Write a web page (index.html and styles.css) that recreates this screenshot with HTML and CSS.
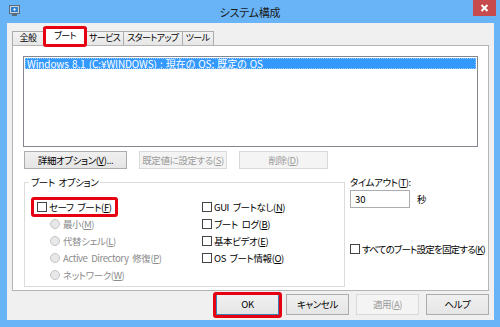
FILE: index.html
```html
<!DOCTYPE html>
<html lang="ja">
<head>
<meta charset="utf-8">
<title>システム構成</title>
<link rel="stylesheet" href="styles.css">
</head>
<body>
<div class="window">
  <div class="titlebar">
    <svg class="appicon" viewBox="0 0 11 11" width="11" height="11">
      <rect x="0.5" y="0.5" width="10" height="8" fill="#c9d3dc" stroke="#5a6b7a"/>
      <rect x="2" y="2" width="7" height="5" fill="#2f7fd1"/>
      <path d="M4 4.5 L5.5 3 L7 4.5 L5.5 6 Z" fill="#e8f3ff"/>
      <rect x="3" y="9" width="5" height="2" fill="#5a6b7a"/>
    </svg>
    <div class="title">システム構成</div>
    <div class="close">
      <svg viewBox="0 0 23 16" width="23" height="16">
        <path d="M8.5 5 L14.5 11 M14.5 5 L8.5 11" stroke="#fff" stroke-width="2"/>
      </svg>
    </div>
  </div>
  <div class="client">
    <div class="tabs">
      <div class="tab">全般</div>
      <div class="tab active">ブート</div>
      <div class="tab">サービス</div>
      <div class="tab">スタートアップ</div>
      <div class="tab">ツール</div>
    </div>
    <div class="panel">
      <div class="listbox">
        <div class="item sel">Windows 8.1 (C:¥WINDOWS) : 現在の OS; 既定の OS</div>
      </div>
      <div class="btnrow">
        <div class="btn w-adv">詳細オプション(<u>V</u>)...</div>
        <div class="btn disabled w-def">既定値に設定する(<u>S</u>)</div>
        <div class="btn disabled w-del">削除(<u>D</u>)</div>
      </div>
      <div class="lower">
        <fieldset class="group">
          <legend>ブート オプション</legend>
          <div class="groupbody">
            <div class="col col1">
              <div class="row hl"><span class="chk"></span>セーフ ブート(<u>F</u>)</div>
              <div class="row sub dis"><span class="radio"></span>最小(<u>M</u>)</div>
              <div class="row sub dis"><span class="radio"></span>代替シェル(<u>L</u>)</div>
              <div class="row sub dis"><span class="radio"></span>Active Directory 修復(<u>P</u>)</div>
              <div class="row sub dis"><span class="radio"></span>ネットワーク(<u>W</u>)</div>
            </div>
            <div class="col col2">
              <div class="row"><span class="chk"></span>GUI ブートなし(<u>N</u>)</div>
              <div class="row"><span class="chk"></span>ブート ログ(<u>B</u>)</div>
              <div class="row"><span class="chk"></span>基本ビデオ(<u>E</u>)</div>
              <div class="row"><span class="chk"></span>OS ブート情報(<u>O</u>)</div>
            </div>
          </div>
        </fieldset>
        <div class="side">
          <div class="label">タイムアウト(<u>T</u>):</div>
          <div class="timeout">
            <div class="input">30</div>
            <span class="unit">秒</span>
          </div>
          <div class="row lock"><span class="chk"></span>すべてのブート設定を固定する(<u>K</u>)</div>
        </div>
      </div>
    </div>
    <div class="footer">
      <div class="btn fbtn default">OK</div>
      <div class="btn fbtn">キャンセル</div>
      <div class="btn fbtn disabled">適用(<u>A</u>)</div>
      <div class="btn fbtn">ヘルプ</div>
    </div>
  </div>
</div>
</body>
</html>
```
FILE: styles.css
```css
* { box-sizing: border-box; }
body {
  margin: 0;
  font-family: "Noto Sans CJK JP", "Liberation Sans", sans-serif;
  font-size: 9.5px;
  letter-spacing: -0.4px;
  word-spacing: 2px;
  font-feature-settings: "palt";
  color: #000;
}
u { text-decoration: underline; text-underline-offset: 1px; }

.window {
  width: 500px;
  height: 327px;
  background: #69b4f6;
  display: flex;
  flex-direction: column;
  overflow: hidden;
}
.titlebar {
  height: 23px;
  flex: none;
  display: grid;
  grid-template-columns: 1fr auto 1fr;
  align-items: start;
}
.appicon { margin: 5px 0 0 9px; }
.title {
  font-size: 11px;
  letter-spacing: -0.2px;
  line-height: 25px;
  color: #1a1a1a;
}
.close {
  justify-self: end;
  width: 23px;
  height: 16px;
  margin-right: 4px;
  background: #c74a4c;
}
.close svg { display: block; }

.client {
  flex: 1;
  margin: 0 6px 7px 7px;
  background: #f0f0f0;
  display: flex;
  flex-direction: column;
}

.tabs {
  height: 22px;
  flex: none;
  display: flex;
  align-items: flex-end;
  padding-left: 6px;
  position: relative;
  z-index: 1;
}
.tab {
  height: 14px;
  min-width: 32px;
  border: 1px solid #acacac;
  border-bottom: none;
  margin-left: -1px;
  padding: 0 3px;
  background: linear-gradient(#f3f3f3, #e6e6e6);
  font-size: 9px;
  letter-spacing: -0.6px;
  line-height: 12px;
  text-align: center;
  white-space: nowrap;
}
.tab.active {
  height: 19px;
  width: 44px;
  margin: 0 -1px -1px -1px;
  background: #fff;
  padding-top: 2px;
  position: relative;
  z-index: 2;
}
.tab.active::after {
  content: "";
  position: absolute;
  left: -1px;
  right: -1px;
  top: -2px;
  bottom: -1px;
  border: 3px solid #e60012;
  border-radius: 3px;
}

.panel {
  height: 246px;
  flex: none;
  margin: 0 5px;
  background: #fff;
  border: 1px solid #b4b4b4;
  padding: 10px 10px 0 10px;
}

.listbox {
  height: 91px;
  border: 1px solid #828790;
  background: #fff;
  padding: 1px;
}
.item {
  height: 11px;
  line-height: 11px;
  padding-left: 2px;
  white-space: nowrap;
  font-size: 10px;
  letter-spacing: -0.1px;
  word-spacing: 1px;
}
.item.sel {
  background: #3399ff;
  color: #fff;
  outline: 1px dotted #9cc9f5;
  outline-offset: -1px;
}

.btnrow {
  display: flex;
  gap: 12px;
  margin-top: 4px;
  padding-left: 1px;
}
.btn {
  height: 18px;
  border: 1px solid #acacac;
  background: linear-gradient(#f0f0f0, #e5e5e5);
  text-align: center;
  line-height: 16px;
  white-space: nowrap;
}
.btn.disabled {
  background: #f4f4f4;
  border-color: #d9d9d9;
  color: #9a9a9a;
}
.w-adv { width: 103px; }
.w-def { width: 88px; }
.w-del { width: 89px; }

.lower {
  display: flex;
  margin-top: 7px;
}
.group {
  flex: none;
  width: 321px;
  margin: 0 0 0 1px;
  padding: 0;
  border: 1px solid #dcdcdc;
  min-width: 0;
}
.group legend {
  margin-left: 4px;
  padding: 0 2px;
  line-height: 12px;
}
.groupbody {
  height: 98px;
  display: flex;
  padding: 10px 0 0 12px;
}
.col { display: flex; flex-direction: column; }
.col1 { width: 165px; }
.row {
  height: 17px;
  display: flex;
  align-items: center;
  white-space: nowrap;
}
.row.sub { padding-left: 13px; }
.row.dis { color: #8a8a8a; }
.chk {
  width: 10px;
  height: 10px;
  border: 1px solid #444;
  background: #fff;
  margin-right: 2px;
  flex: none;
}
.radio {
  width: 10px;
  height: 10px;
  border-radius: 50%;
  border: 1px solid #c4c4c4;
  background: #e8e8e8;
  margin-right: 3px;
  flex: none;
}
.row.hl {
  position: relative;
  align-self: flex-start;
}
.row.hl::after {
  content: "";
  position: absolute;
  left: -6px;
  right: -6px;
  top: -1px;
  bottom: -2px;
  border: 3px solid #e60012;
  border-radius: 3px;
}

.side {
  flex: none;
  margin-left: 5px;
  display: flex;
  flex-direction: column;
}
.label { line-height: 12px; }
.timeout {
  display: flex;
  align-items: center;
  margin-top: 2px;
}
.input {
  width: 60px;
  height: 18px;
  border: 1px solid #abadb3;
  background: #fff;
  padding-left: 4px;
  line-height: 16px;
  letter-spacing: 0;
}
.unit { margin-left: 7px; }
.row.lock {
  margin-top: 32px;
  letter-spacing: -0.8px;
}

.footer {
  display: flex;
  justify-content: flex-end;
  gap: 7px;
  margin-top: 3px;
  padding-right: 5px;
}
.fbtn {
  width: 63px;
  height: 21px;
  line-height: 19px;
}
.fbtn.default {
  border-color: #3c7fb1;
  position: relative;
}
.fbtn.default::after {
  content: "";
  position: absolute;
  left: -4px;
  right: -4px;
  top: -3px;
  bottom: -4px;
  border: 3px solid #e60012;
  border-radius: 3px;
}
```
